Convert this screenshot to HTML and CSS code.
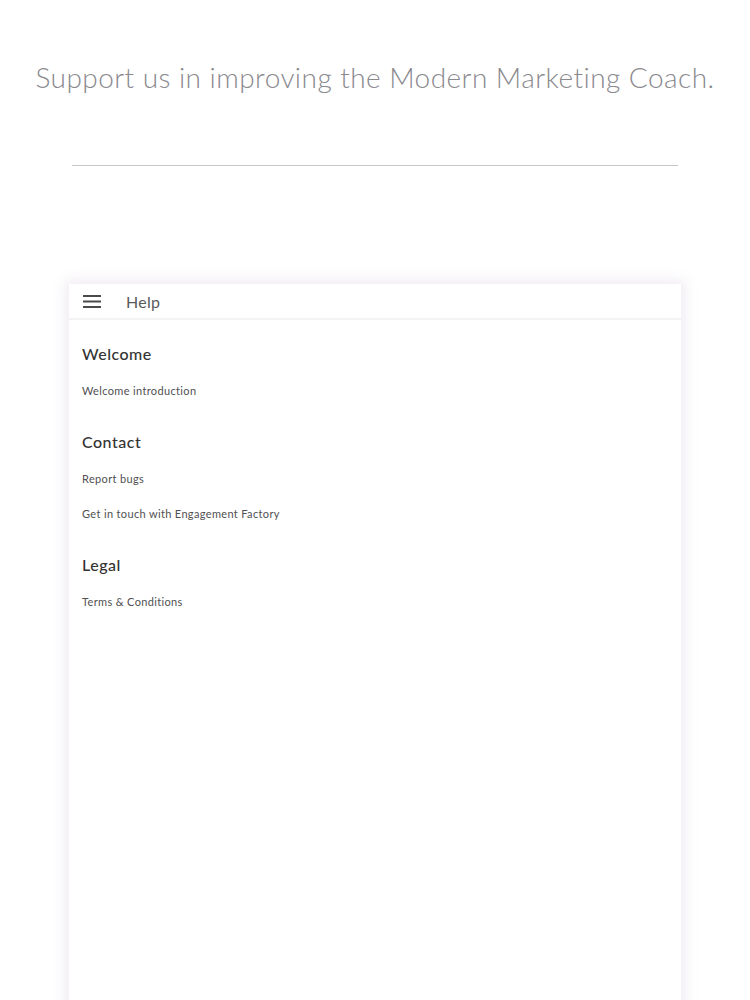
FILE: index.html
```html
<!DOCTYPE html>
<html lang="en">
<head>
    <meta charset="UTF-8">
    <meta name="viewport" content="width=device-width, initial-scale=1.0">
    <title>Help</title>
    <link rel="stylesheet" href="styles.css">
</head>
<body>
    <h1 class="tagline">Support us in improving the Modern Marketing Coach.</h1>
    <div class="divider"></div>

    <div class="card">
        <!-- App bar -->
        <div class="app-bar">
            <svg class="menu-icon" width="18" height="13" viewBox="0 0 18 13">
                <rect x="0" y="0" width="18" height="2" fill="#4a4a4a"/>
                <rect x="0" y="5.5" width="18" height="2" fill="#4a4a4a"/>
                <rect x="0" y="11" width="18" height="2" fill="#4a4a4a"/>
            </svg>
            <span class="app-title">Help</span>
        </div>

        <div class="content">
            <div class="section">
                <h2>Welcome</h2>
                <a class="item" href="#">Welcome introduction</a>
            </div>
            <div class="section">
                <h2>Contact</h2>
                <a class="item" href="#">Report bugs</a>
                <a class="item" href="#">Get in touch with Engagement Factory</a>
            </div>
            <div class="section">
                <h2>Legal</h2>
                <a class="item" href="#">Terms &amp; Conditions</a>
            </div>
        </div>
    </div>
</body>
</html>
```

FILE: styles.css
```css
body {
    margin: 0;
    background-color: #fff;
    font-family: Lato, "Open Sans", Arial, sans-serif;
    overflow: hidden;
}
.tagline {
    margin: 61px 0 0;
    font-size: 28px;
    line-height: 32px;
    font-weight: 300;
    color: #8a898e;
    text-align: center;
    letter-spacing: 0.45px;
}
.divider {
    margin: 72px 72px 0;
    height: 1px;
    background-color: #c6c6c8;
}
/* Phone card */
.card {
    margin: 118px 69px 0;
    min-height: 760px;
    background: #fff;
    box-shadow: 0 0 12px 4px rgba(240, 234, 242, 0.9);
}
.app-bar {
    display: flex;
    align-items: center;
    height: 34px;
    padding-left: 14px;
    border-bottom: 2px solid #f3f2f4;
}
.menu-icon {
    display: block;
}
.app-title {
    margin-left: 25px;
    font-size: 16px;
    color: #5a5a5c;
    letter-spacing: 0.3px;
}
.content {
    padding: 24px 13px 0;
}
.section {
    margin-bottom: 24px;
}
.section h2 {
    margin: 0 0 9px;
    font-size: 16px;
    line-height: 20px;
    font-weight: 500;
    color: #333;
    letter-spacing: 0.5px;
}
.item {
    display: block;
    font-size: 11px;
    line-height: 35px;
    color: #505052;
    text-decoration: none;
    letter-spacing: 0.35px;
}
```
